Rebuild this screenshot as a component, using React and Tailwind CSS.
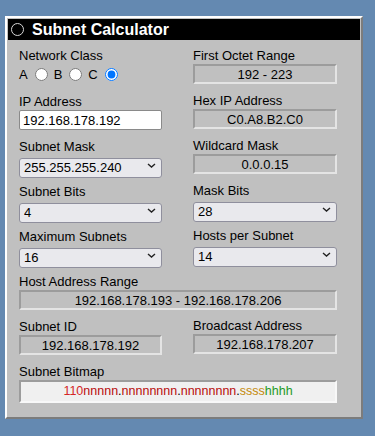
import { useState } from "react";

function Label({ children }) {
  return <div className="h-[15px] text-[13px] leading-[15px] whitespace-nowrap">{children}</div>;
}

function ReadBox({ children }) {
  return (
    <div className="mt-px h-[20px] flex items-center justify-center border-2 border-t-[#9c9c9c] border-l-[#9c9c9c] border-r-[#e4e4e4] border-b-[#e4e4e4] bg-[#c0c0c0] text-[13px] leading-none">
      {children}
    </div>
  );
}

function Select({ value, options }) {
  return (
    <div className="relative mt-px h-[20px]">
      <select
        defaultValue={value}
        className="appearance-none w-full h-[20px] bg-[#e9e9ed] border border-[#8f8f9d] rounded-[3px] pl-[4px] text-[13px] leading-none outline-none"
      >
        {options.map((o) => (
          <option key={o} value={o}>
            {o}
          </option>
        ))}
      </select>
      <svg
        className="absolute right-[6px] top-[8px] pointer-events-none"
        width="9"
        height="5"
        viewBox="0 0 9 5"
      >
        <path d="M1 1 L4.5 4 L8 1" fill="none" stroke="#222" strokeWidth="1.4" />
      </svg>
    </div>
  );
}

export default function App() {
  const [netClass, setNetClass] = useState("C");
  const [ip, setIp] = useState("192.168.178.192");

  return (
    <div className="min-h-screen bg-[#6489b1] pt-[16px] pl-[5px] font-['Liberation_Sans',Arial,sans-serif] text-black">
      <div className="w-[358px] border-2 border-t-white border-l-white border-r-[#7c7c7c] border-b-[#7c7c7c] bg-[#c0c0c0] pt-px px-px pb-[14px]">
        {/* title bar */}
        <div className="h-[21px] bg-black flex items-center pl-[3px] gap-[8px]">
          <div className="w-[13px] h-[13px] rounded-full bg-black border border-[#d8d8d8]" />
          <span className="text-white font-bold text-[16px] leading-none">Subnet Calculator</span>
        </div>

        <div className="mt-[8px] pl-[11px] grid grid-cols-[143px_144px] gap-x-[31px] gap-y-[9px]">
          <div>
            <Label>Network Class</Label>
            <div className="mt-px h-[21px] flex items-center gap-[6px] text-[13px]">
              {["A", "B", "C"].map((c) => (
                <div key={c} className="flex items-center gap-[7px]">
                  <span>{c}</span>
                  <input
                    type="radio"
                    name="netclass"
                    checked={netClass === c}
                    onChange={() => setNetClass(c)}
                    className="m-0 w-[13px] h-[13px]"
                  />
                </div>
              ))}
            </div>
          </div>
          <div>
            <Label>First Octet Range</Label>
            <ReadBox>192 - 223</ReadBox>
          </div>

          <div>
            <Label>IP Address</Label>
            <input
              value={ip}
              onChange={(e) => setIp(e.target.value)}
              className="mt-px block w-full h-[20px] bg-white border border-[#8a8a8a] rounded-[2px] px-[3px] text-[13px] outline-none"
            />
          </div>
          <div className="-mt-px">
            <Label>Hex IP Address</Label>
            <ReadBox>C0.A8.B2.C0</ReadBox>
          </div>

          <div>
            <Label>Subnet Mask</Label>
            <Select
              value="255.255.255.240"
              options={["255.255.255.0", "255.255.255.128", "255.255.255.192", "255.255.255.224", "255.255.255.240", "255.255.255.248", "255.255.255.252"]}
            />
          </div>
          <div className="-mt-px">
            <Label>Wildcard Mask</Label>
            <ReadBox>0.0.0.15</ReadBox>
          </div>

          <div>
            <Label>Subnet Bits</Label>
            <Select value="4" options={["0", "1", "2", "3", "4", "5", "6"]} />
          </div>
          <div className="-mt-px">
            <Label>Mask Bits</Label>
            <Select value="28" options={["24", "25", "26", "27", "28", "29", "30"]} />
          </div>

          <div>
            <Label>Maximum Subnets</Label>
            <Select value="16" options={["1", "2", "4", "8", "16", "32", "64"]} />
          </div>
          <div className="-mt-px">
            <Label>Hosts per Subnet</Label>
            <Select value="14" options={["254", "126", "62", "30", "14", "6", "2"]} />
          </div>

          <div className="col-span-2">
            <Label>Host Address Range</Label>
            <ReadBox>192.168.178.193 - 192.168.178.206</ReadBox>
          </div>

          <div>
            <Label>Subnet ID</Label>
            <ReadBox>192.168.178.192</ReadBox>
          </div>
          <div className="-mt-px">
            <Label>Broadcast Address</Label>
            <ReadBox>192.168.178.207</ReadBox>
          </div>

          <div className="col-span-2">
            <Label>Subnet Bitmap</Label>
            <div className="mt-px h-[23px] flex items-center justify-center border-2 border-t-[#9c9c9c] border-l-[#9c9c9c] border-r-[#f8f8f8] border-b-[#f8f8f8] bg-[#f0f0f0] text-[12.5px] leading-none">
              <span className="text-[#d42626]">110</span>
              <span className="text-[#b80c0c]">nnnnn</span>
              <span>.</span>
              <span className="text-[#b80c0c]">nnnnnnnn</span>
              <span>.</span>
              <span className="text-[#b80c0c]">nnnnnnnn</span>
              <span>.</span>
              <span className="text-[#c48a0a]">ssss</span>
              <span className="text-[#1f9a1f]">hhhh</span>
            </div>
          </div>
        </div>
      </div>
    </div>
  );
}
